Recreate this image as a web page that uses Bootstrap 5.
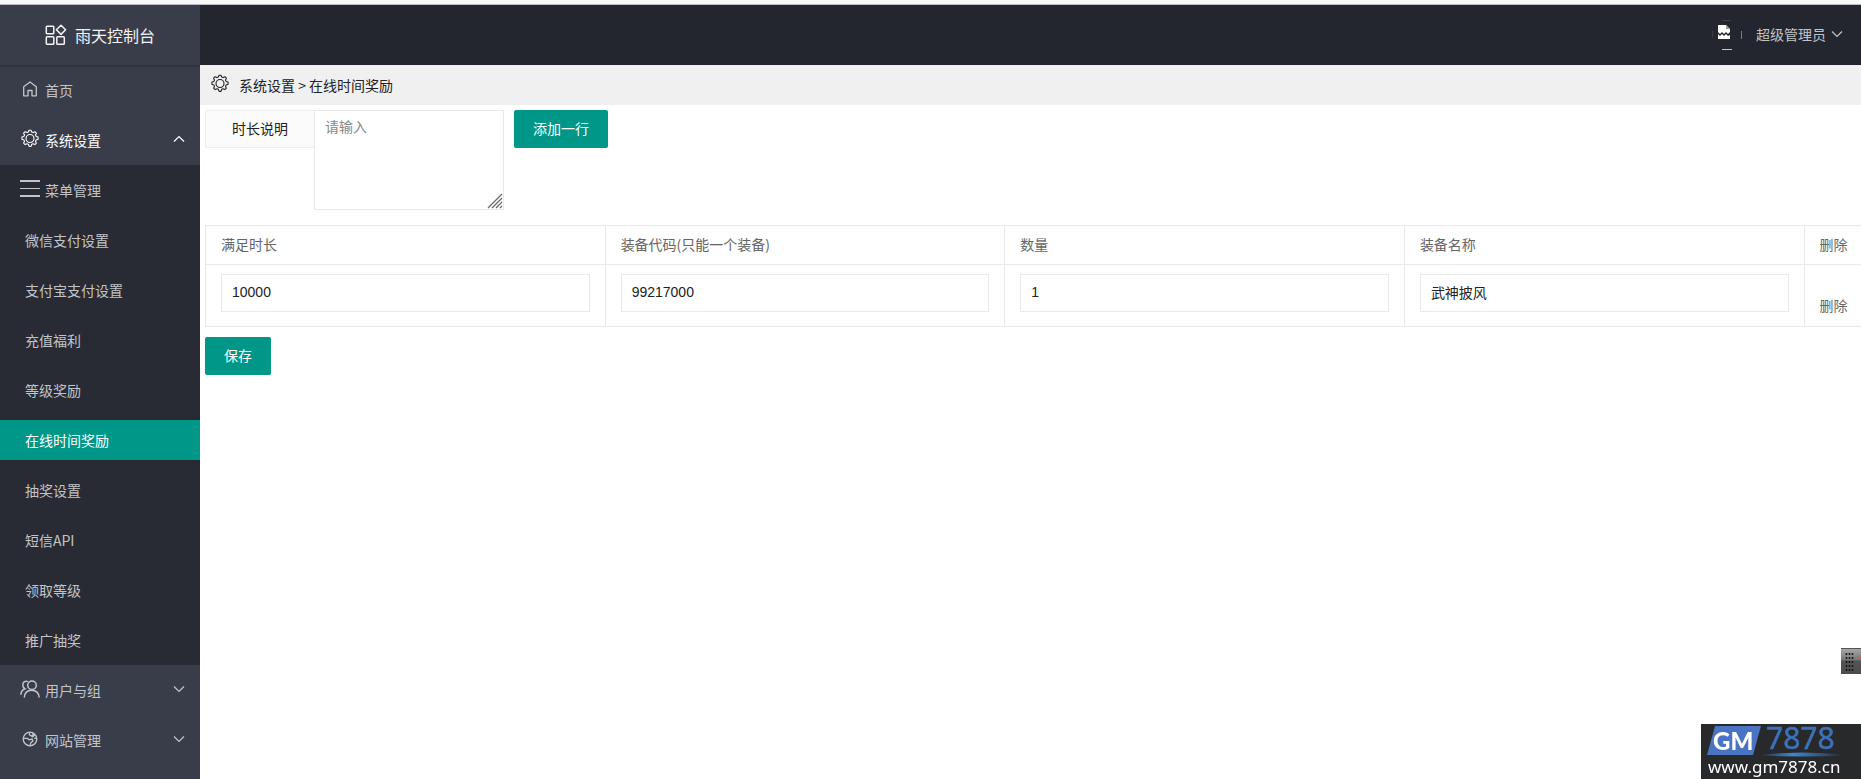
<!DOCTYPE html>
<html lang="zh-CN">
<head>
<meta charset="utf-8">
<meta name="viewport" content="width=device-width, initial-scale=1">
<title>雨天控制台</title>
<link href="https://cdn.jsdelivr.net/npm/bootstrap@5.3.0/dist/css/bootstrap.min.css" rel="stylesheet">
<style>
  body { font: 14px/24px "Noto Sans CJK SC", sans-serif; color: #222; background: #fff; overflow-x: hidden; }
  .top-strip { height: 5px; background: #f7f8fa; border-bottom: 1px solid #b9bbc0; }
  .side { width: 200px; background: #393d49; }
  .brand { height: 60px; font-size: 16px; color: #f2f3f5; box-shadow: 0 1px 2px rgba(0,0,0,.3); }
  .side-link { height: 50px; padding: 0 15px 0 20px; color: #c2c5ca; text-decoration: none; gap: 5px; }
  .side-link svg.lead-icon { width: 20px; height: 20px; flex: none; margin-bottom: 2px; }
  .side-link.open, .side-link:hover { color: #fff; }
  .side-link .arrow { margin-left: auto; margin-bottom: 2px; }
  .submenu { background: #282b33; }
  .submenu a { height: 40px; margin: 5px 0; padding: 0 25px; color: #c2c4c8; text-decoration: none; gap: 5px; }
  .submenu li { display: flow-root; }
  .submenu a.with-icon { padding-left: 20px; }
  .submenu a.current { background: #009688; color: #fff; }
  .topbar { height: 60px; background: #23262e; padding: 0 18px 2px 0; }
  .user-link { color: #c2c4c8; text-decoration: none; gap: 5px; }
  .crumbs { height: 40px; background: #f0f0f0; padding-left: 10px; gap: 9px; }
  .crumbs svg { margin-bottom: 2px; }
  .panel-body { padding: 5px 0 0 5px; }
  .field-label { width: 110px; height: 38px; line-height: 34px; border: 1px solid #eee; border-radius: 2px 0 0 2px; background: #fbfbfb; text-align: center; margin-right: -1px; }
  .field-box { width: 190px; height: 100px; margin-right: 10px; }
  .form-control { border: 1px solid #e9e9e9; border-radius: 0; font-size: 14px; color: #222; background: #fff; box-shadow: none; }
  textarea.form-control { padding: 3px 10px; height: 100px; resize: none; line-height: 24px; }
  textarea.form-control::placeholder { color: #888; }
  .grip { right: 1px; bottom: 1px; pointer-events: none; }
  .btn-teal { height: 38px; padding: 0 19px 2px; border: 0; border-radius: 2px; background: #009688; color: #fff; font-size: 14px; }
  .btn-teal:hover { background: #33ab9f; color: #fff; }
  .prize-table { table-layout: fixed; margin: 15px 0 10px; --bs-table-bg: transparent; color: #666; border-color: #e9e9e9; }
  .prize-table th { height: 39px; padding: 6px 15px 8px; font-weight: 400; color: #666; }
  .prize-table td { padding: 9px 15px 14px; vertical-align: bottom; color: #666; }
  .prize-table td:last-child { padding-bottom: 9px; }
  .prize-table .form-control { height: 38px; padding: 0 10px 2px; font-family: "Liberation Sans", "Noto Sans CJK SC", sans-serif; }
  .prize-table .col-remove { width: 57px; }
  .prize-table tr > :last-child { border-right: 0; padding-right: 0; }
  .prize-table a { color: #666; text-decoration: none; }
  .dock { position: fixed; right: 0; bottom: 105px; width: 20px; height: 26px; }
  .site-mark { position: fixed; right: 0; bottom: 0; width: 160px; height: 55px; background: #27292b; overflow: visible; }
</style>
</head>
<body>
<svg width="0" height="0" class="d-none">
  <symbol id="gear" viewBox="0 0 20 20">
    <g fill="none" stroke="currentColor" stroke-width="1.1" stroke-linejoin="round">
      <path d="M8.300 3.100 9 1.200h2l.7 1.900 1.300.5 1.900-.9 1.500 1.500-.9 1.800.6 1.400 2 .7v2.200l-2 .7-.6 1.300.9 1.900-1.500 1.400-1.900-.8-1.300.5-.7 2.100H9.200l-.9-2.100-1.300-.5-1.900.8-1.500-1.400.9-1.900-.6-1.300-2-.7V8.100l2-.7.6-1.400-.9-1.800 1.500-1.500 1.900.9z"/>
      <circle cx="10" cy="9.500" r="4"/>
    </g>
  </symbol>
  <symbol id="chev" viewBox="0 0 12 8"><path d="M1 1.500 6 6.500 11 1.500" fill="none" stroke="currentColor" stroke-width="1.200"/></symbol>
</svg>

<div class="d-flex flex-column min-vh-100">
  <div class="top-strip"></div>
  <div class="d-flex flex-grow-1">
    <nav class="side flex-shrink-0">
      <div class="brand d-flex align-items-center justify-content-center gap-2">
        <svg width="22" height="22" viewBox="0 0 22 22" fill="none" stroke="currentColor" stroke-width="1.500"><rect x="1.300" y="2.300" width="7.500" height="7.500" rx=".8"/><rect x="1.300" y="12.800" width="7.500" height="7.500" rx=".8"/><rect x="11.800" y="12.800" width="7.500" height="7.500" rx=".8"/><path d="m16 1.200 4.600 4.600-4.600 4.600-4.600-4.600z" stroke-linejoin="round"/></svg>
        <span>雨天控制台</span>
      </div>
      <ul class="list-unstyled mb-0">
        <li><a href="#" class="side-link d-flex align-items-center">
          <svg class="lead-icon" viewBox="0 0 20 20" fill="none" stroke="currentColor" stroke-width="1.300"><path d="M8 16.800H3.700V7.700L10 3l6.300 4.700v9.100H12v-5.300H8z" stroke-linejoin="round"/></svg>
          <span>首页</span></a></li>
        <li><a href="#" class="side-link open d-flex align-items-center">
          <svg class="lead-icon"><use href="#gear"/></svg>
          <span>系统设置</span>
          <svg class="arrow" width="12" height="8"><use href="#chev" transform="rotate(180 6 4)"/></svg></a>
          <ul class="submenu list-unstyled">
            <li><a href="#" class="with-icon d-flex align-items-center"><svg width="20" height="20" viewBox="0 0 20 20" class="mb-1" fill="none" stroke="currentColor"><path d="M0 3h20M0 18h20" stroke-width="1.800"/><path d="M0 10.500h20"/></svg><span>菜单管理</span></a></li>
            <li><a href="#" class="d-flex align-items-center">微信支付设置</a></li>
            <li><a href="#" class="d-flex align-items-center">支付宝支付设置</a></li>
            <li><a href="#" class="d-flex align-items-center">充值福利</a></li>
            <li><a href="#" class="d-flex align-items-center">等级奖励</a></li>
            <li><a href="#" class="current d-flex align-items-center">在线时间奖励</a></li>
            <li><a href="#" class="d-flex align-items-center">抽奖设置</a></li>
            <li><a href="#" class="d-flex align-items-center">短信API</a></li>
            <li><a href="#" class="d-flex align-items-center">领取等级</a></li>
            <li><a href="#" class="d-flex align-items-center">推广抽奖</a></li>
          </ul>
        </li>
        <li><a href="#" class="side-link d-flex align-items-center">
          <svg class="lead-icon" viewBox="0 0 20 20" fill="none" stroke="currentColor" stroke-width="1.500"><circle cx="12" cy="6.300" r="4.300"/><path d="M4.300 18.500c.3-4.500 3-7.300 7.300-7.300s7.200 2.800 7.600 7.300M8 2.700C5.500 1.400 2.800 3 2.800 6c0 1.700.8 3 2.200 3.800C2.300 10.800 1 12.900.8 15.800"/></svg>
          <span>用户与组</span>
          <svg class="arrow" width="12" height="8"><use href="#chev"/></svg></a></li>
        <li><a href="#" class="side-link d-flex align-items-center">
          <svg class="lead-icon" viewBox="0 0 20 20" fill="none" stroke="currentColor" stroke-width="1.300"><circle cx="10" cy="10" r="6.800"/><path d="M3.300 9.300h4.200l1.500 1.500 3-.8 1 1.800-2.200 2-.8 2.800M9.800 3.400l-.5 2.300 2.300 1.400 1.600-1.600-.2-1.500M12.300 8.200l2.500-2.700M14.200 9.300l2.400-.3"/></svg>
          <span>网站管理</span>
          <svg class="arrow" width="12" height="8"><use href="#chev"/></svg></a></li>
      </ul>
    </nav>

    <div class="flex-grow-1 overflow-hidden">
      <header class="topbar d-flex align-items-center justify-content-end">
        <a href="#" class="user-link d-flex align-items-center">
          <svg width="34" height="34" viewBox="0 0 34 34"><path d="M9 8h8l4 4v3l-2 2-2-2-2 2-2-2-2 2-2-2z" fill="#fff"/><path d="m17 8 4 4h-4z" fill="#9a9ca2"/><path d="m9 17 2 2 2-2 2 2 2-2 2 2 2-1v4H9z" fill="#fff"/><path d="M32.500 14v8" stroke="#777a82"/><path d="M3.500 14v6" stroke="#3c3f47"/><path d="M13 32.500h10" stroke="#c8c9cc"/><path d="M13 3.500h9" stroke="#3c3f47"/></svg>
          <span class="ms-2">超级管理员</span>
          <svg width="12" height="8"><use href="#chev"/></svg>
        </a>
      </header>
      <div class="crumbs d-flex align-items-center">
        <svg width="20" height="20"><use href="#gear"/></svg>
        <span>系统设置 &gt; 在线时间奖励</span>
      </div>
      <main>
        <form class="panel-body">
          <div class="d-flex align-items-start">
            <label class="field-label" for="note">时长说明</label>
            <div class="field-box position-relative">
              <textarea class="form-control" id="note" placeholder="请输入"></textarea>
              <svg class="grip position-absolute" width="16" height="16" viewBox="0 0 16 16" stroke="#666" stroke-width="1.200"><path d="M1 15 15 1M5 15 15 5M9 15l6-6M13 15l2-2"/></svg>
            </div>
            <button type="button" class="btn btn-teal">添加一行</button>
          </div>
          <table class="table table-bordered prize-table">
            <thead>
              <tr><th>满足时长</th><th>装备代码(只能一个装备)</th><th>数量</th><th>装备名称</th><th class="col-remove">删除</th></tr>
            </thead>
            <tbody>
              <tr>
                <td><input class="form-control" aria-label="满足时长" value="10000"></td>
                <td><input class="form-control" aria-label="装备代码" value="99217000"></td>
                <td><input class="form-control" aria-label="数量" value="1"></td>
                <td><input class="form-control" aria-label="装备名称" value="武神披风"></td>
                <td><a href="#">删除</a></td>
              </tr>
            </tbody>
          </table>
          <button type="submit" class="btn btn-teal">保存</button>
        </form>
      </main>
    </div>
  </div>
</div>

<svg class="dock" viewBox="0 0 20 26">
  <defs><linearGradient id="steel" x2="0" y2="1"><stop offset="0" stop-color="#aaa"/><stop offset=".45" stop-color="#777"/><stop offset=".5" stop-color="#555"/><stop offset="1" stop-color="#4c4c4e"/></linearGradient></defs>
  <path fill="url(#steel)" d="M0 0h20v26H0z"/><path d="M0 .5h20" stroke="#555"/>
  <path d="M5.500 5v18M8.500 5v18M11.500 5v18" stroke="#151515" stroke-width="1.500" stroke-dasharray="2 2"/>
  <circle cx="20" cy="10" r="2" fill="#d0584c"/>
</svg>
<svg class="site-mark" viewBox="0 0 160 55">
  <defs><linearGradient id="swoosh"><stop offset="0" stop-color="#3f84d4" stop-opacity="0"/><stop offset=".4" stop-color="#3f84d4"/><stop offset="1" stop-color="#3f84d4" stop-opacity="0"/></linearGradient></defs>
  <path d="M14 2h46l-8 29H6z" fill="#4a73c4"/>
  <text x="12" y="26" font-family="Lato" font-weight="900" font-size="24" fill="#fff">GM</text>
  <text x="65" y="25" font-family="Noto Sans" font-size="30" fill="#3d72b8" stroke="#3d72b8" stroke-width=".5">7878</text>
  <path d="M56 31q45-5 90 0-45 3-90 0z" fill="url(#swoosh)"/>
  <text x="7" y="49" font-family="Noto Sans" font-size="17" fill="#fff">www.gm7878.cn</text>
</svg>
<script src="https://cdn.jsdelivr.net/npm/bootstrap@5.3.0/dist/js/bootstrap.bundle.min.js"></script>
</body>
</html>
